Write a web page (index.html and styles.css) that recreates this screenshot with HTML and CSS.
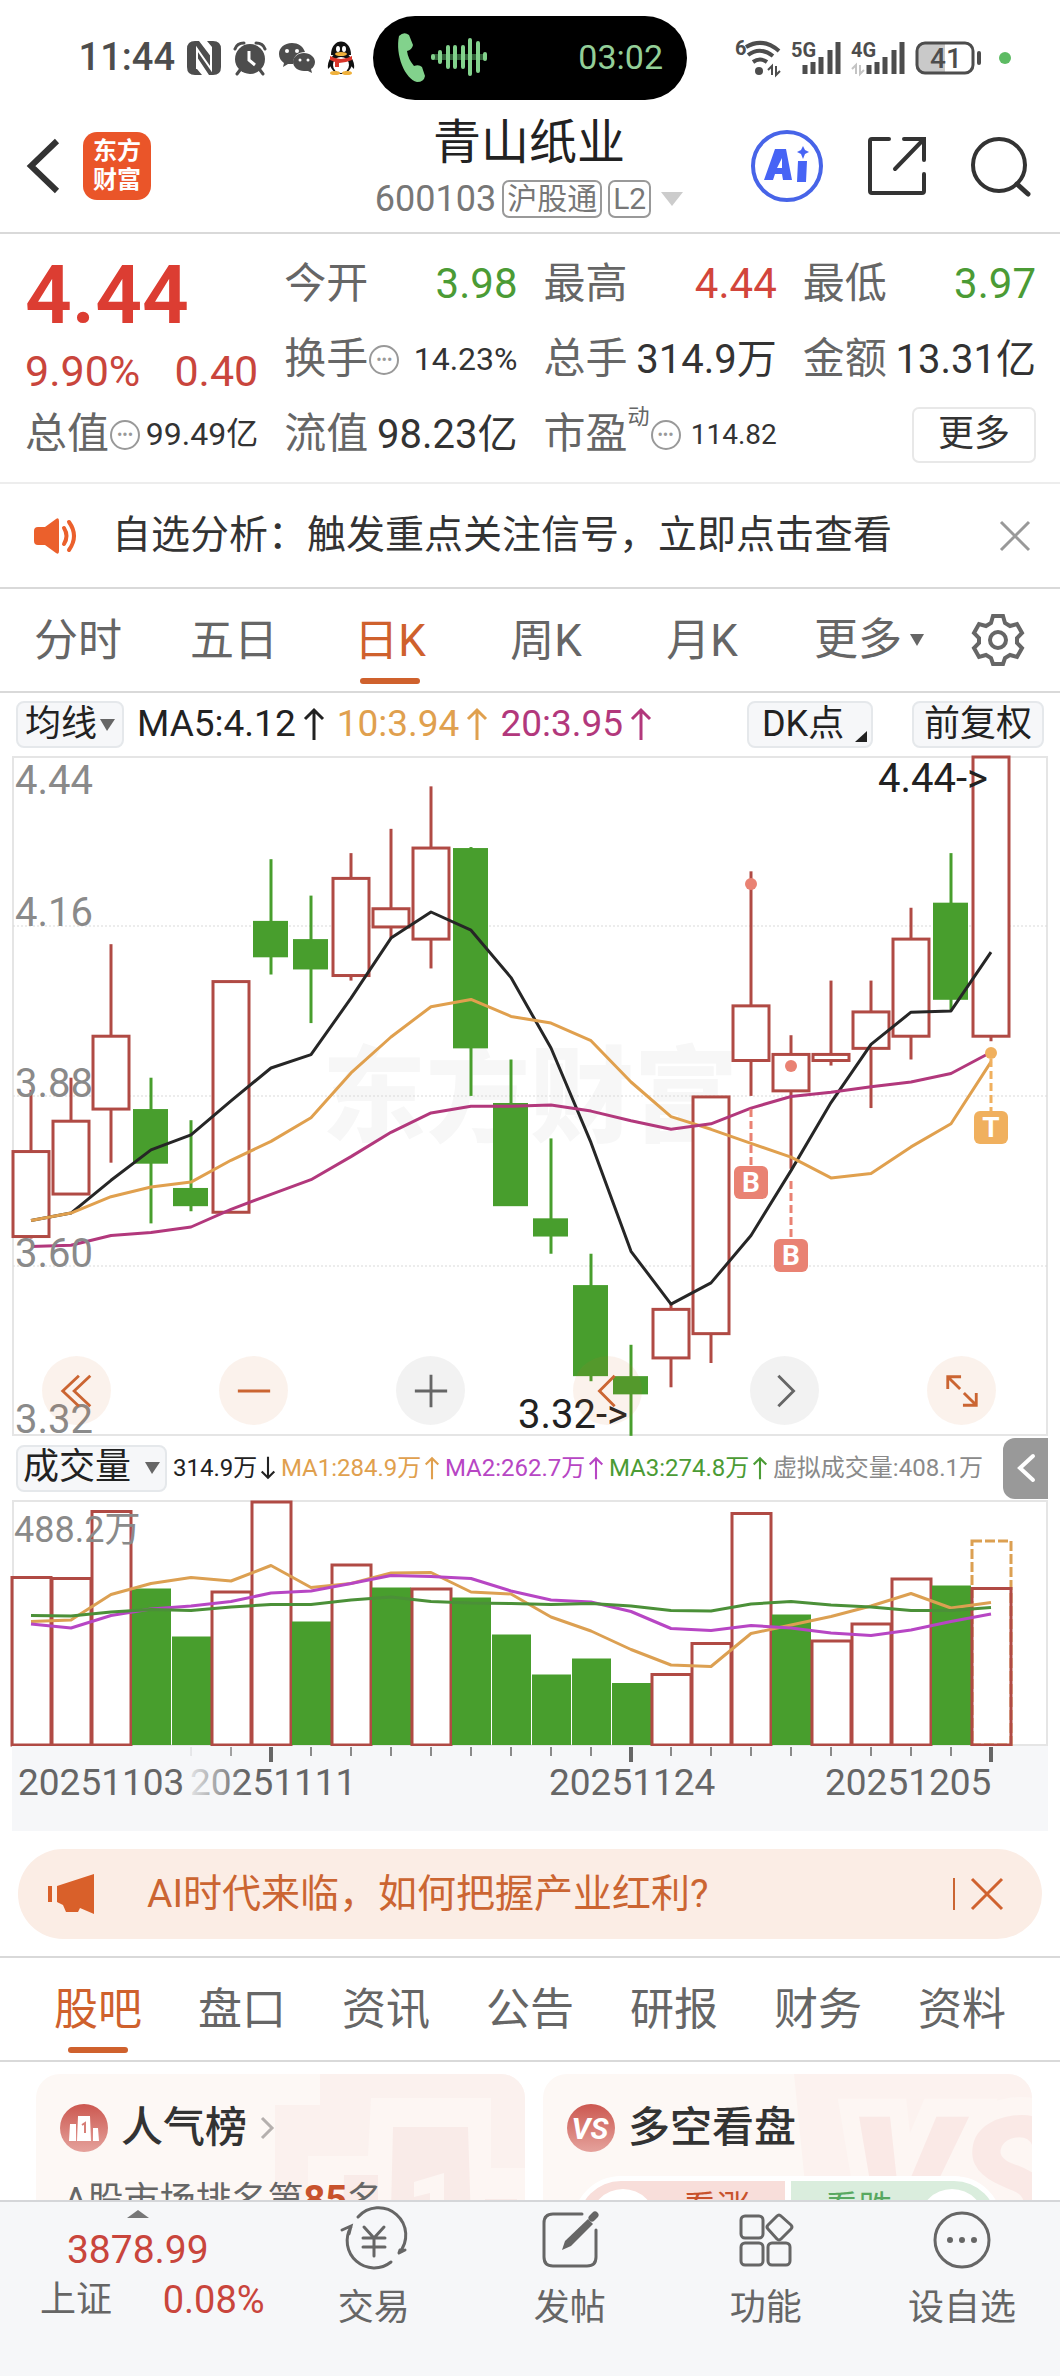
FILE: index.html
```html
<!DOCTYPE html>
<html lang="zh-CN">
<head>
    <meta charset="UTF-8">
    <meta name="viewport" content="width=device-width, initial-scale=1.0">
    <title>青山纸业 600103</title>
    <link rel="stylesheet" href="styles.css">
</head>
<body>

    <div class="status-bar">
        <div class="status-left">
            <span class="clock">11:44</span>
            <svg width="34" height="34" viewBox="0 0 34 34">
                <path d="M8 0h4l13 17V6l-5-6h6q8 0 8 8v18q0 8-8 8h-4L10 16v12l5 6H8q-8 0-8-8V8Q0 0 8 0z" fill="#4d4d4d"/>
                <path d="M10 28V8l14 20V7" fill="none" stroke="#fff" stroke-width="2"/>
            </svg>
            <svg width="34" height="34" viewBox="0 0 34 34">
                <circle cx="17" cy="18" r="15" fill="#4d4d4d"/>
                <path d="M2 8q2-6 9-6M32 8q-2-6-9-6M7 29l-3 4M27 29l3 4" fill="none" stroke="#4d4d4d" stroke-width="3" stroke-linecap="round"/>
                <path d="M16 10v9l6 5" fill="none" stroke="#fff" stroke-width="3"/>
            </svg>
            <svg width="36" height="32" viewBox="0 0 36 32">
                <path d="M13 1C5 1 0 6 0 12c0 4 2 7 5 9l-1 4 5-3h5c0-8 5-12 12-12C24 4 19 1 13 1z" fill="#4d4d4d"/>
                <path d="M25 11c-6 0-11 4-11 9s5 9 11 9h4l4 2-1-4c2-1 4-4 4-7 0-5-5-9-11-9z" fill="#4d4d4d"/>
                <g fill="#fff"><circle cx="8" cy="9" r="2"/><circle cx="18" cy="9" r="2"/><circle cx="21" cy="18" r="1.5"/><circle cx="29" cy="18" r="1.5"/></g>
            </svg>
            <svg width="28" height="34" viewBox="0 0 28 34">
                <path d="M4 16q-4 6-3 12l4-4M24 16q4 6 3 12l-4-4" fill="#111"/>
                <ellipse cx="14" cy="22" rx="11" ry="11" fill="#111"/>
                <path d="M4 14C4-4 24-4 24 14z" fill="#111"/>
                <ellipse cx="14" cy="24" rx="8" ry="8" fill="#fff"/>
                <ellipse cx="8" cy="32" rx="5" ry="2" fill="#f0b13c"/><ellipse cx="20" cy="32" rx="5" ry="2" fill="#f0b13c"/>
                <path d="M3 15q11 6 22 0v4q-7 3-13 3v4H8v-5l-5-2z" fill="#d8352a"/>
                <ellipse cx="11" cy="8" rx="2" ry="3" fill="#fff"/><ellipse cx="17" cy="8" rx="2" ry="3" fill="#fff"/>
                <ellipse cx="14" cy="13" rx="6" ry="2" fill="#f0b13c"/>
            </svg>
        </div>
        <div class="island">
            <svg width="90" height="50" viewBox="0 0 90 50">
                <path d="M2 3q5-5 10-1l4 10q-1 5-6 6 1 8 7 15 5-2 8 1l3 9q-1 6-8 6C8 46-2 22 2 3z" fill="#82d28c"/>
                <path d="M36 21h52v6H36z" fill="#2f5c36"/>
                <path d="M36 23v2M43 19v10M51 14v20M58 14v20M66 14v20M73 7v34M81 10v28M88 21v5" stroke="#82d28c" stroke-width="4" stroke-linecap="round"/>
            </svg>
            <span>03:02</span>
        </div>
        <div class="status-right">
            <svg width="46" height="36" viewBox="0 0 46 36">
                <text x="0" y="15" class="tiny-text">6</text>
                <g fill="none" stroke="#4d4d4d" stroke-width="4"><path d="M11 7Q28-3 44 11M13 15q12-9 25 1M18 22q7-5 14 0"/></g>
                <circle cx="24" cy="31" r="4" fill="#4d4d4d"/>
                <path d="M37 35V26l-4 4M41 26v9l4-4" fill="none" stroke="#4d4d4d" stroke-width="2"/>
            </svg>
            <svg width="50" height="36" viewBox="0 0 50 36">
                <text x="0" y="17" class="tiny-text">5G</text>
                <path d="M14 34v-9M22 34V22M30 34V17M39 34V10M47 34V2" stroke="#4d4d4d" stroke-width="5"/>
            </svg>
            <svg width="54" height="36" viewBox="0 0 54 36">
                <text x="0" y="17" class="tiny-text">4G</text>
                <path d="M5 34V25l-4 4M9 25v9l4-4" fill="none" stroke="#c4c4c4" stroke-width="2"/>
                <path d="M18 34v-9M26 34V22M34 34V17M43 34V10M51 34V2" stroke="#4d4d4d" stroke-width="5"/>
            </svg>
            <svg width="68" height="34" viewBox="0 0 68 34">
                <path d="M9 2h21v30H9q-7 0-7-7V9q0-7 7-7z" fill="#c9c9c9"/>
                <rect x="2" y="2" width="56" height="30" rx="8" fill="none" stroke="#4d4d4d" stroke-width="3"/>
                <path d="M64 12v10" stroke="#4d4d4d" stroke-width="4" stroke-linecap="round"/>
                <text x="15" y="27" class="battery-text">41</text>
            </svg>
            <span class="dot"></span>
        </div>
    </div>

    <header class="header">
        <div class="header-left">
            <button class="icon-btn" aria-label="返回">
                <svg width="32" height="56" viewBox="0 0 32 56"><path d="M30 3L4 28l26 25" fill="none" stroke="#333" stroke-width="6"/></svg>
            </button>
            <a href="#" class="logo">东方<br>财富</a>
        </div>
        <div class="title">
            <h1>青山纸业</h1>
            <div class="subtitle">600103 <span class="tag">沪股通</span><span class="tag">L2</span>
                <svg width="22" height="14" viewBox="0 0 22 14"><path d="M0 0h22L11 14z" fill="#ccc"/></svg>
            </div>
        </div>
        <div class="header-right">
            <button class="icon-btn" aria-label="AI">
                <svg width="72" height="74" viewBox="0 0 72 74">
                    <circle cx="36" cy="37" r="34" fill="none" stroke="#4764e8" stroke-width="4"/>
                    <path d="M24 20h11l6 31h-9l-1-6h-7l-2 6h-9zM31 29l-5 10h5zM47 32h9l-1 21h-9z" fill="#4764f5" fill-rule="evenodd"/>
                    <path d="M52 17l2 4 4 2-4 2-2 5-2-5-4-2 4-2z" fill="#4764f5"/>
                </svg>
            </button>
            <button class="icon-btn" aria-label="分享">
                <svg width="60" height="60" viewBox="0 0 60 60"><path d="M22 3H5q-2 0-2 2v50q0 2 2 2h50q2 0 2-2V38M37 3h20v21M56 4L28 33" fill="none" stroke="#333" stroke-width="4" stroke-linecap="round"/></svg>
            </button>
            <button class="icon-btn" aria-label="搜索">
                <svg width="60" height="60" viewBox="0 0 60 60"><circle cx="28" cy="29" r="26" fill="none" stroke="#333" stroke-width="4"/><path d="M46 48l11 10" stroke="#333" stroke-width="5" stroke-linecap="round"/></svg>
            </button>
        </div>
    </header>

    <section class="quote">
        <div class="price-box">
            <div class="price">4.44</div>
            <div class="change"><span>9.90%</span><span>0.40</span></div>
        </div>
        <div class="cell"><span class="name">今开</span><span class="value down">3.98</span></div>
        <div class="cell"><span class="name">最高</span><span class="value up">4.44</span></div>
        <div class="cell"><span class="name">最低</span><span class="value down">3.97</span></div>
        <div class="cell"><span class="name">换手</span><i class="more-dot">•••</i><span class="value small">14.23%</span></div>
        <div class="cell"><span class="name">总手</span><span class="value mid">314.9万</span></div>
        <div class="cell"><span class="name">金额</span><span class="value mid">13.31亿</span></div>
        <div class="cell"><span class="name">总值</span><i class="more-dot">•••</i><span class="value small">99.49亿</span></div>
        <div class="cell"><span class="name">流值</span><span class="value mid">98.23亿</span></div>
        <div class="cell"><span class="name">市盈</span><sup>动</sup><i class="more-dot">•••</i><span class="value tiny">114.82</span></div>
        <div class="cell"><button class="more-btn">更多</button></div>
    </section>

    <section class="notice">
        <svg width="44" height="36" viewBox="0 0 44 36">
            <path d="M4 9h7L22 1q3-2 3 2v30q0 4-3 2l-11-8H4q-4 0-4-4V13q0-4 4-4z" fill="#eb602c"/>
            <path d="M30 10q5 8 0 16M35 4q10 14 0 28" fill="none" stroke="#eb602c" stroke-width="4" stroke-linecap="round"/>
        </svg>
        <p>自选分析：触发重点关注信号，立即点击查看</p>
        <button class="icon-btn" aria-label="关闭">
            <svg width="30" height="30" viewBox="0 0 30 30"><path d="M1 1l28 28M29 1L1 29" stroke="#999" stroke-width="3"/></svg>
        </button>
    </section>

    <nav class="chart-tabs">
        <a href="#">分时</a>
        <a href="#">五日</a>
        <a href="#" class="active">日K</a>
        <a href="#">周K</a>
        <a href="#">月K</a>
        <a href="#" class="tab-more">更多<svg width="14" height="12" viewBox="0 0 14 12"><path d="M0 0h14L7 12z" fill="#666"/></svg></a>
        <button class="icon-btn" aria-label="设置">
            <svg width="52" height="52" viewBox="0 0 52 52">
                <path d="M21 2h10l2 7 5 3 7-2 5 9-5 5v5l5 5-5 9-7-2-5 3-2 6H21l-2-6-5-3-7 2-5-9 5-5v-5l-5-5 5-9 7 2 5-3z" fill="none" stroke="#666" stroke-width="4"/>
                <circle cx="26" cy="26" r="8" fill="none" stroke="#666" stroke-width="4"/>
            </svg>
        </button>
    </nav>

    <main class="charts">
        <div class="indicator-row">
            <button class="chip">均线<svg width="15" height="12" viewBox="0 0 15 12"><path d="M0 0h15L7 12z" fill="#666"/></svg></button>
            <span class="ma black">MA5:4.12<svg class="arrow" viewBox="0 0 20 32"><path d="M10 32V2M1 11l9-9 9 9"/></svg></span>
            <span class="ma orange">10:3.94<svg class="arrow" viewBox="0 0 20 32"><path d="M10 32V2M1 11l9-9 9 9"/></svg></span>
            <span class="ma pink">20:3.95<svg class="arrow" viewBox="0 0 20 32"><path d="M10 32V2M1 11l9-9 9 9"/></svg></span>
            <button class="chip dk">DK点</button>
            <button class="chip last">前复权</button>
        </div>

        <div class="k-chart">
            <svg id="k-chart" viewBox="0 0 1036 680"></svg>
            <div class="controls">
                <button class="on" aria-label="最左"><svg viewBox="0 0 40 40"><path d="M22 4L5 20l17 16M34 4L17 20l17 16"/></svg></button>
                <button class="on" aria-label="缩小"><svg viewBox="0 0 40 40"><path d="M3 20h34"/></svg></button>
                <button aria-label="放大"><svg viewBox="0 0 40 40"><path d="M3 20h34M20 3v34"/></svg></button>
                <button class="on" aria-label="左移"><svg viewBox="0 0 40 40"><path d="M27 4L11 20l16 16"/></svg></button>
                <button aria-label="右移"><svg viewBox="0 0 40 40"><path d="M13 4l16 16-16 16"/></svg></button>
                <button class="on" aria-label="全屏"><svg viewBox="0 0 40 40"><path d="M5 18V5h14M6 6l12 12M22 22l12 12M35 22v13H21"/></svg></button>
            </div>
        </div>

        <div class="volume-row">
            <button class="chip wide">成交量<svg width="15" height="12" viewBox="0 0 15 12"><path d="M0 0h15L7 12z" fill="#666"/></svg></button>
            <div class="volume-values">
                <span class="black">314.9万<svg class="arrow" viewBox="0 0 20 32"><path d="M10 0v30M1 21l9 9 9-9"/></svg></span>
                <span class="orange">MA1:284.9万<svg class="arrow" viewBox="0 0 20 32"><path d="M10 32V2M1 11l9-9 9 9"/></svg></span>
                <span class="purple">MA2:262.7万<svg class="arrow" viewBox="0 0 20 32"><path d="M10 32V2M1 11l9-9 9 9"/></svg></span>
                <span class="green">MA3:274.8万<svg class="arrow" viewBox="0 0 20 32"><path d="M10 32V2M1 11l9-9 9 9"/></svg></span>
                <span class="gray">虚拟成交量:408.1万</span>
            </div>
            <button class="collapse" aria-label="展开">
                <svg width="18" height="30" viewBox="0 0 18 30"><path d="M16 3L3 15l13 12" fill="none" stroke="#fff" stroke-width="4" stroke-linecap="round"/></svg>
            </button>
        </div>

        <svg id="volume-chart" viewBox="0 0 1036 246"></svg>
        <svg id="axis" viewBox="0 0 1036 85"></svg>
    </main>

    <section class="banner">
        <svg width="46" height="40" viewBox="0 0 46 40"><path d="M0 12h4v16H0zM9 12L46 0v40l-14-6-2 4H18l-3-7-6-3z" fill="#d9602a"/></svg>
        <p>AI时代来临，如何把握产业红利?</p>
        <button class="icon-btn" aria-label="关闭">
            <svg width="32" height="32" viewBox="0 0 32 32"><path d="M1 1l30 30M31 1L1 31" stroke="#d0622f" stroke-width="3"/></svg>
        </button>
    </section>

    <nav class="info-tabs">
        <a href="#" class="active">股吧</a>
        <a href="#">盘口</a>
        <a href="#">资讯</a>
        <a href="#">公告</a>
        <a href="#">研报</a>
        <a href="#">财务</a>
        <a href="#">资料</a>
    </nav>

    <section class="cards">
        <article class="card">
            <svg class="card-art" width="250" height="180" viewBox="0 0 250 180">
                <path d="M45 0h205v180H0V31h45z" fill="#fbf1ee"/>
                <path d="M96 24h120v70h34v86H33V82h60z" fill="#fdf6f3"/>
                <path d="M118 53h75l4 127h-82zM69 101h34v79H67zM210 125h32v55h-32z" fill="#f9ebe8"/>
                <path d="M139 108l30-9v81h-14v-61l-16 4z" fill="#fdf6f3"/>
            </svg>
            <h2>
                <svg width="48" height="48" viewBox="0 0 48 48">
                    <defs><linearGradient id="badge" x2="0" y2="1"><stop offset="0" stop-color="#cc5850"/><stop offset="1" stop-color="#e5a29c"/></linearGradient></defs>
                    <circle cx="24" cy="24" r="24" fill="url(#badge)"/>
                    <path d="M10 20h6v17H9zM18 12h12l1 25H17zM33 24h5l1 13h-6z" fill="#fff"/>
                    <path d="M22 21l3-2v10" fill="none" stroke="#d77f78" stroke-width="2"/>
                </svg>
                人气榜
                <svg class="chevron" width="14" height="24" viewBox="0 0 14 24"><path d="M2 2l10 10L2 22" fill="none" stroke="#b5b0ae" stroke-width="3"/></svg>
            </h2>
            <p class="rank">A股市场排名第<b>85</b>名</p>
        </article>
        <article class="card">
            <svg class="card-art" width="250" height="180" viewBox="0 0 250 180">
                <path d="M12 0h238v180H30z" fill="#fcf2ef"/>
                <text x="66" y="164" class="art-vs">VS</text>
            </svg>
            <h2>
                <svg width="48" height="48" viewBox="0 0 48 48"><circle cx="24" cy="24" r="24" fill="url(#badge)"/><text x="23" y="35" class="badge-vs">VS</text></svg>
                多空看盘
            </h2>
            <div class="vote">
                <button class="vote-up"><i></i>看涨</button>
                <button class="vote-down">看跌<i></i></button>
            </div>
        </article>
    </section>

    <footer class="footer">
        <a href="#" class="index-box">
            <svg width="22" height="8" viewBox="0 0 22 8"><path d="M0 8L11 0l11 8z" fill="#777"/></svg>
            <span class="index-value">3878.99</span>
            <span class="index-row"><span>上证</span><span class="index-change">0.08%</span></span>
        </a>
        <a href="#" class="tool">
            <svg width="66" height="60" viewBox="0 0 66 60">
                <path d="M17 7a27 27 0 0 1 41 36l1-3M58 43l6-3M50 52A27 27 0 0 1 10 17M1 20l9-4-2 8" />
                <path d="M23 17l10 11 10-11M33 28v18M22 28h22M22 37h22"/>
            </svg>交易
        </a>
        <a href="#" class="tool">
            <svg width="60" height="60" viewBox="0 0 60 60">
                <path d="M42 4H13q-9 0-9 9v34q0 9 9 9h34q9 0 9-9V20"/>
                <path d="M22 40l3-9 23-22 5 5-22 22z" fill="#666" stroke="none"/><path d="M52 8l3-3" stroke-width="7"/>
            </svg>发帖
        </a>
        <a href="#" class="tool">
            <svg width="60" height="60" viewBox="0 0 60 60">
                <rect x="5" y="6" width="22" height="22" rx="4"/><rect x="5" y="33" width="22" height="22" rx="4"/><rect x="32" y="33" width="22" height="22" rx="4"/>
                <path d="M41 6q2-2 4 0l10 9q2 2 0 4L45 29q-2 2-4 0L32 19q-2-2 0-4z"/>
            </svg>功能
        </a>
        <a href="#" class="tool">
            <svg width="60" height="60" viewBox="0 0 60 60">
                <circle cx="30" cy="30" r="27"/><g fill="#666" stroke="none"><circle cx="18" cy="30" r="3"/><circle cx="30" cy="30" r="3"/><circle cx="42" cy="30" r="3"/></g>
            </svg>设自选
        </a>
    </footer>

    <script src="script.js"></script>
</body>
</html>
```

FILE: styles.css
```css
* {
    box-sizing: border-box;
}
body {
    margin: 0;
    height: 100vh;
    display: flex;
    flex-direction: column;
    overflow: hidden;
    background-color: #fff;
    color: #333;
    font-family: Roboto, "Noto Sans CJK SC", sans-serif;
    font-size: 36px;
    line-height: 1.2;
}
body > * {
    flex-shrink: 0;
}
h1, h2, p {
    margin: 0;
    font-weight: normal;
}
a {
    color: inherit;
    text-decoration: none;
}
svg {
    display: block;
    flex-shrink: 0;
    overflow: visible;
}
button {
    font: inherit;
    color: inherit;
    margin: 0;
    padding: 0;
    cursor: pointer;
}
.icon-btn {
    border: 0;
    background: none;
}

/* status bar */
.status-bar {
    display: grid;
    grid-template-columns: 1fr 314px 1fr;
    align-items: center;
    height: 115px;
}
.status-left, .status-right {
    display: flex;
    align-items: center;
    gap: 12px;
}
.status-left {
    justify-content: flex-end;
    padding-right: 18px;
}
.status-right {
    padding-left: 48px;
    gap: 10px;
}
.clock {
    font-size: 38px;
    font-weight: 500;
    color: #4d4d4d;
}
.island {
    display: flex;
    align-items: center;
    justify-content: space-between;
    height: 84px;
    padding: 0 24px;
    border-radius: 42px;
    background-color: #000;
    color: #93cf98;
    font-size: 34px;
}
.tiny-text {
    font-size: 20px;
    font-weight: 700;
    fill: #4d4d4d;
}
.battery-text {
    font-size: 28px;
    font-weight: 500;
    fill: #4d4d4d;
}
.dot {
    width: 12px;
    height: 12px;
    margin-left: 6px;
    border-radius: 50%;
    background-color: #5dbb63;
}

/* header */
.header {
    display: grid;
    grid-template-columns: 1fr auto 1fr;
    align-items: center;
    align-content: center;
    height: 119px;
    padding: 0 29px 16px 27px;
    border-bottom: 2px solid #d9d9d9;
}
.header-left, .header-right {
    display: flex;
    align-items: center;
    gap: 24px;
}
.header-right {
    justify-content: flex-end;
    gap: 44px;
}
.logo {
    width: 68px;
    height: 68px;
    padding-top: 5px;
    border-radius: 14px;
    background-color: #ea5529;
    color: #fff;
    font-size: 24px;
    font-weight: 700;
    line-height: 29px;
    text-align: center;
}
.title {
    padding-top: 10px;
    line-height: 57px;
}
.title h1 {
    font-size: 48px;
    color: #222;
    text-align: center;
}
.subtitle {
    display: flex;
    align-items: center;
    gap: 6px;
    color: #777;
}
.tag {
    padding: 0 3px;
    border: 2px solid #999;
    border-radius: 7px;
    font-size: 30px;
    line-height: 34px;
}
.subtitle svg {
    margin-left: 4px;
}

/* quote */
.quote {
    display: grid;
    grid-template-columns: repeat(4, 1fr);
    grid-auto-rows: 75px;
    column-gap: 26px;
    padding: 13px 24px 10px 25px;
    border-bottom: 2px solid #ededed;
}
.price-box {
    grid-row: span 2;
    color: #dc3d32;
}
.price {
    font-size: 82px;
    font-weight: 600;
    line-height: 96px;
}
.change {
    display: flex;
    justify-content: space-between;
    font-size: 43px;
    line-height: 56px;
    color: #c9453c;
}
.cell {
    display: flex;
    align-items: center;
    color: #666;
    white-space: nowrap;
}
.name {
    font-size: 42px;
}
.cell sup {
    align-self: flex-start;
    font-size: 22px;
    line-height: 40px;
}
.value {
    margin-left: auto;
    font-size: 42px;
    color: #333;
}
.mid {
    font-size: 40px;
}
.small {
    font-size: 32px;
}
.tiny {
    font-size: 28px;
}
.up {
    color: #d2453b;
}
.down {
    color: #4b9b35;
}
.more-dot {
    width: 30px;
    height: 30px;
    margin-left: 1px;
    border: 2px solid #999;
    border-radius: 50%;
    color: #999;
    font-size: 16px;
    font-style: normal;
    line-height: 26px;
    text-align: center;
}
.more-btn {
    width: 124px;
    height: 56px;
    margin-left: auto;
    border: 2px solid #e8e8e8;
    border-radius: 7px;
    background-color: #fff;
    color: #333;
}

/* notice */
.notice {
    display: flex;
    align-items: center;
    height: 105px;
    padding: 0 30px 0 34px;
    border-bottom: 2px solid #d9d9d9;
}
.notice p, .banner p {
    flex: 1;
    font-size: 39px;
}
.notice p {
    margin-left: 34px;
}

/* tabs */
.chart-tabs, .info-tabs {
    display: flex;
    height: 104px;
    border-bottom: 2px solid #d9d9d9;
    color: #666;
    font-size: 44px;
    line-height: 104px;
    text-align: center;
}
.chart-tabs a {
    position: relative;
    width: 156px;
}
.chart-tabs .tab-more {
    display: flex;
    align-items: center;
    justify-content: center;
    gap: 8px;
    width: 178px;
}
.chart-tabs .icon-btn {
    margin-left: 14px;
}
.info-tabs {
    border-top: 2px solid #d9d9d9;
    height: 106px;
    padding: 0 26px;
}
.info-tabs a {
    position: relative;
    flex: 1;
}
.chart-tabs .active, .info-tabs .active {
    color: #cf612d;
}
.active::after {
    content: "";
    position: absolute;
    left: calc(50% - 30px);
    bottom: 7px;
    width: 60px;
    height: 6px;
    border-radius: 3px;
    background-color: #cf612d;
}

/* charts */
.charts {
    margin: 0 12px;
}
.charts > svg, .k-chart > svg {
    width: 100%;
}
.indicator-row {
    display: flex;
    align-items: center;
    gap: 13px;
    height: 63px;
    padding: 0 4px;
}
.chip {
    display: flex;
    align-items: center;
    justify-content: center;
    gap: 3px;
    height: 47px;
    padding: 0 7px;
    border: 2px solid #e5e8eb;
    border-radius: 8px;
    background-color: #f6f7f9;
    color: #222;
    white-space: nowrap;
}
.chip.last {
    padding: 0 10px;
    margin-left: 26px;
}
.chip.dk {
    position: relative;
    justify-content: flex-start;
    width: 126px;
    padding: 0 13px;
    margin-left: auto;
}
.dk::after {
    content: "";
    position: absolute;
    right: 4px;
    bottom: 4px;
    border-left: 12px solid transparent;
    border-bottom: 11px solid #222;
}
.chip.wide {
    gap: 14px;
    width: 151px;
    padding: 0 6px;
}
.ma, .volume-values span {
    display: flex;
    align-items: center;
}
.ma {
    font-size: 37px;
}
.arrow {
    width: 20px;
    height: 32px;
    margin-left: 8px;
    fill: none;
    stroke: currentColor;
    stroke-width: 3;
}
.volume-values .arrow {
    width: 14px;
    height: 28px;
    margin-left: 4px;
}
.black { color: #222; }
.orange { color: #e0a04e; }
.pink { color: #b2387c; }
.purple { color: #b746c4; }
.green { color: #4b9b35; }
.gray { color: #8a8a8a; }
.k-chart {
    position: relative;
}
.controls {
    position: absolute;
    left: 30px;
    right: 52px;
    bottom: 11px;
    display: flex;
    justify-content: space-between;
}
.controls button {
    display: flex;
    align-items: center;
    justify-content: center;
    width: 69px;
    height: 69px;
    border: 0;
    border-radius: 50%;
    background-color: rgba(90, 90, 90, 0.08);
    color: #666;
}
.controls .on {
    background-color: rgba(214, 106, 42, 0.09);
    color: #cb6532;
}
.controls svg {
    width: 38px;
    height: 38px;
    fill: none;
    stroke: currentColor;
    stroke-width: 3;
}
.volume-row {
    display: flex;
    align-items: center;
    height: 64px;
    padding-left: 4px;
}
.volume-values {
    flex: 1;
    display: flex;
    justify-content: space-between;
    padding: 0 20px 0 6px;
    font-size: 24px;
    white-space: nowrap;
}
.collapse {
    display: flex;
    flex-shrink: 0;
    align-items: center;
    justify-content: center;
    width: 45px;
    height: 61px;
    border: 0;
    border-radius: 12px 0 0 12px;
    background-color: #999;
}
.frame {
    fill: none;
    stroke: #e5e5e5;
    stroke-width: 2;
}
.grid {
    stroke: #d9d9d9;
    stroke-dasharray: 2 2;
}
.scale {
    font-size: 40px;
    fill: #8a8a8a;
}
.mark {
    font-size: 40px;
    fill: #222;
    text-anchor: end;
}
.volume-scale {
    font-size: 36px;
    fill: #8a8a8a;
}
.watermark {
    font-size: 104px;
    font-weight: 900;
    fill: #f7f7f7;
}
.rise {
    fill: #fff;
    stroke: #b04a44;
    stroke-width: 3;
}
.hollow {
    fill: none;
}
.fall {
    fill: #489e2d;
}
.wick-rise {
    stroke: #b04a44;
    stroke-width: 3;
}
.wick-fall {
    stroke: #489e2d;
    stroke-width: 3;
}
.line {
    fill: none;
    stroke-width: 3;
    stroke-linejoin: round;
}
.badge-text {
    font-size: 28px;
    font-weight: 700;
    fill: #fff;
    text-anchor: middle;
}
.date {
    font-size: 37px;
    fill: #666;
}

/* banner */
.banner {
    display: flex;
    align-items: center;
    height: 90px;
    margin: 18px 18px 17px;
    padding: 0 39px 0 30px;
    border-radius: 45px;
    background-color: #fbede5;
    color: #cb6532;
}
.banner p {
    margin-left: 53px;
}
.banner .icon-btn {
    padding-left: 16px;
    border-left: 2px solid #cb6532;
}

/* cards */
.cards {
    flex: 1 1 0;
    min-height: 0;
    overflow: hidden;
    display: grid;
    grid-template-columns: 1fr 1fr;
    align-items: start;
    gap: 18px;
    padding: 12px 28px 0 36px;
}
.card {
    position: relative;
    height: 240px;
    padding: 30px 24px;
    border-radius: 24px;
    overflow: hidden;
    background-color: #fdf8f5;
}
.card-art {
    position: absolute;
    top: 0;
    right: 0;
}
.card h2 {
    position: relative;
    display: flex;
    align-items: center;
    gap: 13px;
    height: 48px;
    font-size: 42px;
    font-weight: 500;
}
.rank {
    position: relative;
    margin-top: 23px;
    padding-left: 4px;
    line-height: 50px;
    color: #666;
}
.rank b {
    color: #c8522c;
    font-size: 38px;
}
.art-vs {
    font-size: 170px;
    font-weight: 900;
    font-style: italic;
    fill: #fae9e6;
    stroke: #fdf6f3;
    stroke-width: 36;
    paint-order: stroke;
}
.badge-vs {
    font-size: 30px;
    font-weight: 700;
    font-style: italic;
    fill: #fff;
    text-anchor: middle;
}
.vote {
    position: relative;
    display: flex;
    gap: 6px;
    height: 96px;
    margin: 24px 6px 0;
    border: 5px solid #fff;
    border-radius: 48px;
    background-color: #fff;
    overflow: hidden;
}
.vote button {
    flex: 1;
    display: flex;
    align-items: flex-start;
    justify-content: space-between;
    padding: 8px 12px;
    border: 0;
    font-size: 34px;
    line-height: 38px;
}
.vote i {
    width: 66px;
    height: 66px;
    border-radius: 50%;
    background-color: #fff;
}
.vote .vote-up {
    padding-right: 34px;
    background-color: #f8deda;
    color: #c8522c;
}
.vote .vote-down {
    padding-left: 34px;
    background-color: #daeddd;
    color: #58a860;
}

/* footer */
.footer {
    display: flex;
    height: 176px;
    border-top: 2px solid #d5d6d9;
    background-color: #f6f7f9;
    color: #666;
}
.index-box {
    display: flex;
    flex-direction: column;
    align-items: center;
    width: 26%;
    padding-top: 8px;
    color: #c9453c;
}
.index-value {
    margin-top: 7px;
    font-size: 39px;
    line-height: 50px;
}
.index-row {
    display: flex;
    align-self: stretch;
    justify-content: space-between;
    padding: 0 11px 0 40px;
    line-height: 50px;
}
.index-row span:first-child {
    color: #666;
}
.index-change {
    font-size: 38px;
}
.tool {
    flex: 1;
    display: flex;
    flex-direction: column;
    align-items: center;
    padding-top: 8px;
    line-height: 54px;
}
.tool svg {
    margin-bottom: 11px;
    fill: none;
    stroke: #666;
    stroke-width: 3;
    stroke-linecap: round;
}
```

FILE: script.js
```js
// open, close, high, low
const candles = [
    [3.65, 3.79, 3.89, 3.645], [3.72, 3.84, 3.91, 3.72], [3.86, 3.98, 4.13, 3.77],
    [3.86, 3.77, 3.91, 3.67], [3.73, 3.70, 3.84, 3.69], [3.69, 4.07, 4.07, 3.69],
    [4.17, 4.11, 4.27, 4.08], [4.14, 4.09, 4.21, 4.00], [4.08, 4.24, 4.28, 4.07],
    [4.16, 4.19, 4.32, 4.14], [4.14, 4.29, 4.39, 4.09], [4.29, 3.96, 4.29, 3.88],
    [3.87, 3.70, 3.94, 3.70], [3.68, 3.65, 3.81, 3.62], [3.57, 3.42, 3.62, 3.41],
    [3.42, 3.39, 3.47, 3.32], [3.45, 3.53, 3.54, 3.40], [3.49, 3.88, 3.88, 3.44],
    [3.94, 4.03, 4.25, 3.88], [3.89, 3.95, 3.98, 3.76], [3.94, 3.95, 4.07, 3.93],
    [3.96, 4.02, 4.07, 3.86], [3.98, 4.14, 4.19, 3.94], [4.20, 4.04, 4.28, 4.02],
    [3.98, 4.44, 4.44, 3.97]
];
const ma5 = [3.675, 3.687, 3.741, 3.791, 3.816, 3.872, 3.926, 3.948, 4.041, 4.14, 4.183, 4.153, 4.075, 3.959, 3.803, 3.624, 3.537, 3.572, 3.65, 3.757, 3.869, 3.965, 4.018, 4.02, 4.117];
const ma10 = [3.675, 3.687, 3.714, 3.73, 3.738, 3.774, 3.805, 3.844, 3.918, 3.977, 4.027, 4.039, 4.011, 4.0, 3.971, 3.903, 3.846, 3.825, 3.802, 3.779, 3.745, 3.752, 3.796, 3.834, 3.936];
const ma20 = [3.632, 3.634, 3.65, 3.655, 3.664, 3.693, 3.718, 3.742, 3.78, 3.82, 3.852, 3.863, 3.863, 3.865, 3.855, 3.839, 3.825, 3.834, 3.86, 3.879, 3.886, 3.895, 3.903, 3.917, 3.952];

const volumes = [337, 335, 469, 313, 217, 308, 488, 247, 362, 315, 314, 295, 221, 141, 173, 124, 143, 205, 465, 261, 210, 244, 334, 319, 315];
const virtualVolume = 408;
const vma1 = [247, 250, 301, 323, 335, 328, 359, 315, 323, 344, 345, 306, 302, 256, 228, 191, 160, 157, 223, 240, 257, 278, 303, 274, 285];
const vma2 = [242, 234, 259, 272, 278, 287, 304, 308, 323, 339, 337, 333, 308, 290, 286, 267, 233, 229, 239, 234, 224, 219, 230, 247, 262];
const vma3 = [259, 258, 266, 271, 269, 276, 281, 281, 290, 296, 287, 284, 283, 281, 283, 278, 269, 268, 282, 287, 280, 276, 269, 269, 275];

const x = i => 19 + i * 40;
const py = price => (4.44 - price) * 607;
const vy = volume => 245 - volume / 2;

function line(values, scale, color) {
    const points = values.map((v, i) => `${x(i)},${scale(v).toFixed(1)}`).join(' ');
    return `<polyline class="line" stroke="${color}" points="${points}"/>`;
}

// DK signal: dot, dashed stem and letter badge
function signal(i, dotY, stemY, badgeY, letter, color) {
    return `<circle cx="${x(i)}" cy="${dotY}" r="6" fill="${color}"/>
        <path d="M${x(i)} ${stemY}V${badgeY}" stroke="${color}" stroke-width="3" stroke-dasharray="8 4"/>
        <rect x="${x(i) - 17}" y="${badgeY}" width="34" height="33" rx="6" fill="${color}"/>
        <text class="badge-text" x="${x(i)}" y="${badgeY + 26}">${letter}</text>`;
}

function drawCandles() {
    let html = '<rect class="frame" x="1" y="1" width="1034" height="678"/>';
    html += '<text class="watermark" x="310" y="378">东方财富</text>';
    [170, 340, 510].forEach(y => {
        html += `<path class="grid" d="M1 ${y}H1035"/>`;
    });
    candles.forEach(([open, close, high, low], i) => {
        const top = py(Math.max(open, close));
        const height = py(Math.min(open, close)) - top;
        const kind = close > open ? 'rise' : 'fall';
        html += `<path class="wick-${kind}" d="M${x(i)} ${py(high)}V${py(low)}"/>`;
        html += `<rect class="${kind}" x="${x(i) - 18}" y="${top + 1}" width="${kind === 'rise' ? 36 : 35}" height="${height}"/>`;
    });
    html += line(ma5, py, '#262626') + line(ma10, py, '#e0a04e') + line(ma20, py, '#b2387c');
    html += signal(18, 128, 353, 410, 'B', '#e98273');
    html += signal(19, 310, 425, 483, 'B', '#e98273');
    html += signal(24, 297, 303, 355, 'T', '#f0b05e');
    [['4.44', 38], ['4.16', 170], ['3.88', 341], ['3.60', 511], ['3.32', 677]].forEach(([text, y]) => {
        html += `<text class="scale" x="3" y="${y}">${text}</text>`;
    });
    html += '<text class="mark" x="976" y="36">4.44-&gt;</text>';
    html += '<text class="mark" x="616" y="672">3.32-&gt;</text>';
    document.getElementById('k-chart').innerHTML = html;
}

function drawVolumes() {
    let html = '<rect class="frame" x="1" y="1" width="1034" height="244"/>';
    html += `<rect x="${x(24) - 19}" y="${vy(virtualVolume)}" width="39" height="${virtualVolume / 2}" fill="none" stroke="#dca052" stroke-width="3" stroke-dasharray="10 3"/>`;
    volumes.forEach((v, i) => {
        // coloured by the change from the previous close
        const rise = i === 0 || candles[i][1] >= candles[i - 1][1];
        html += rise
            ? `<rect class="rise hollow" x="${x(i) - 19}" y="${vy(v) + 1}" width="39" height="${v / 2 - 1}"/>`
            : `<rect class="fall" x="${x(i) - 19}" y="${vy(v)}" width="39" height="${v / 2}"/>`;
    });
    html += line(vma1, vy, '#dca052') + line(vma2, vy, '#b746c4') + line(vma3, vy, '#4b9038');
    html += '<text class="volume-scale" x="2" y="42">488.2万</text>';
    document.getElementById('volume-chart').innerHTML = html;
}

function drawAxis() {
    let html = '<rect width="1036" height="85" fill="#f6f7f9"/>';
    for (let i = 4; i < 25; i++) {
        const major = i % 9 === 6;
        html += `<path d="M${x(i)} 1V${major ? 16 : 10}" stroke="${major ? '#666' : '#8a8a8a'}" stroke-width="${major ? 4 : 2}"/>`;
    }
    [['20251103', 6], ['20251111', 178], ['20251124', 537], ['20251205', 813]].forEach(([text, left]) => {
        html += `<text class="date" x="${left}" y="49">${text}</text>`;
    });
    // the second date fades in beside the first one
    html += '<defs><linearGradient id="fade"><stop offset="0" stop-color="#f6f7f9" stop-opacity="0.9"/><stop offset="1" stop-color="#f6f7f9" stop-opacity="0"/></linearGradient></defs>';
    html += '<rect x="176" width="56" height="85" fill="url(#fade)"/>';
    document.getElementById('axis').innerHTML = html;
}

drawCandles();
drawVolumes();
drawAxis();
```
